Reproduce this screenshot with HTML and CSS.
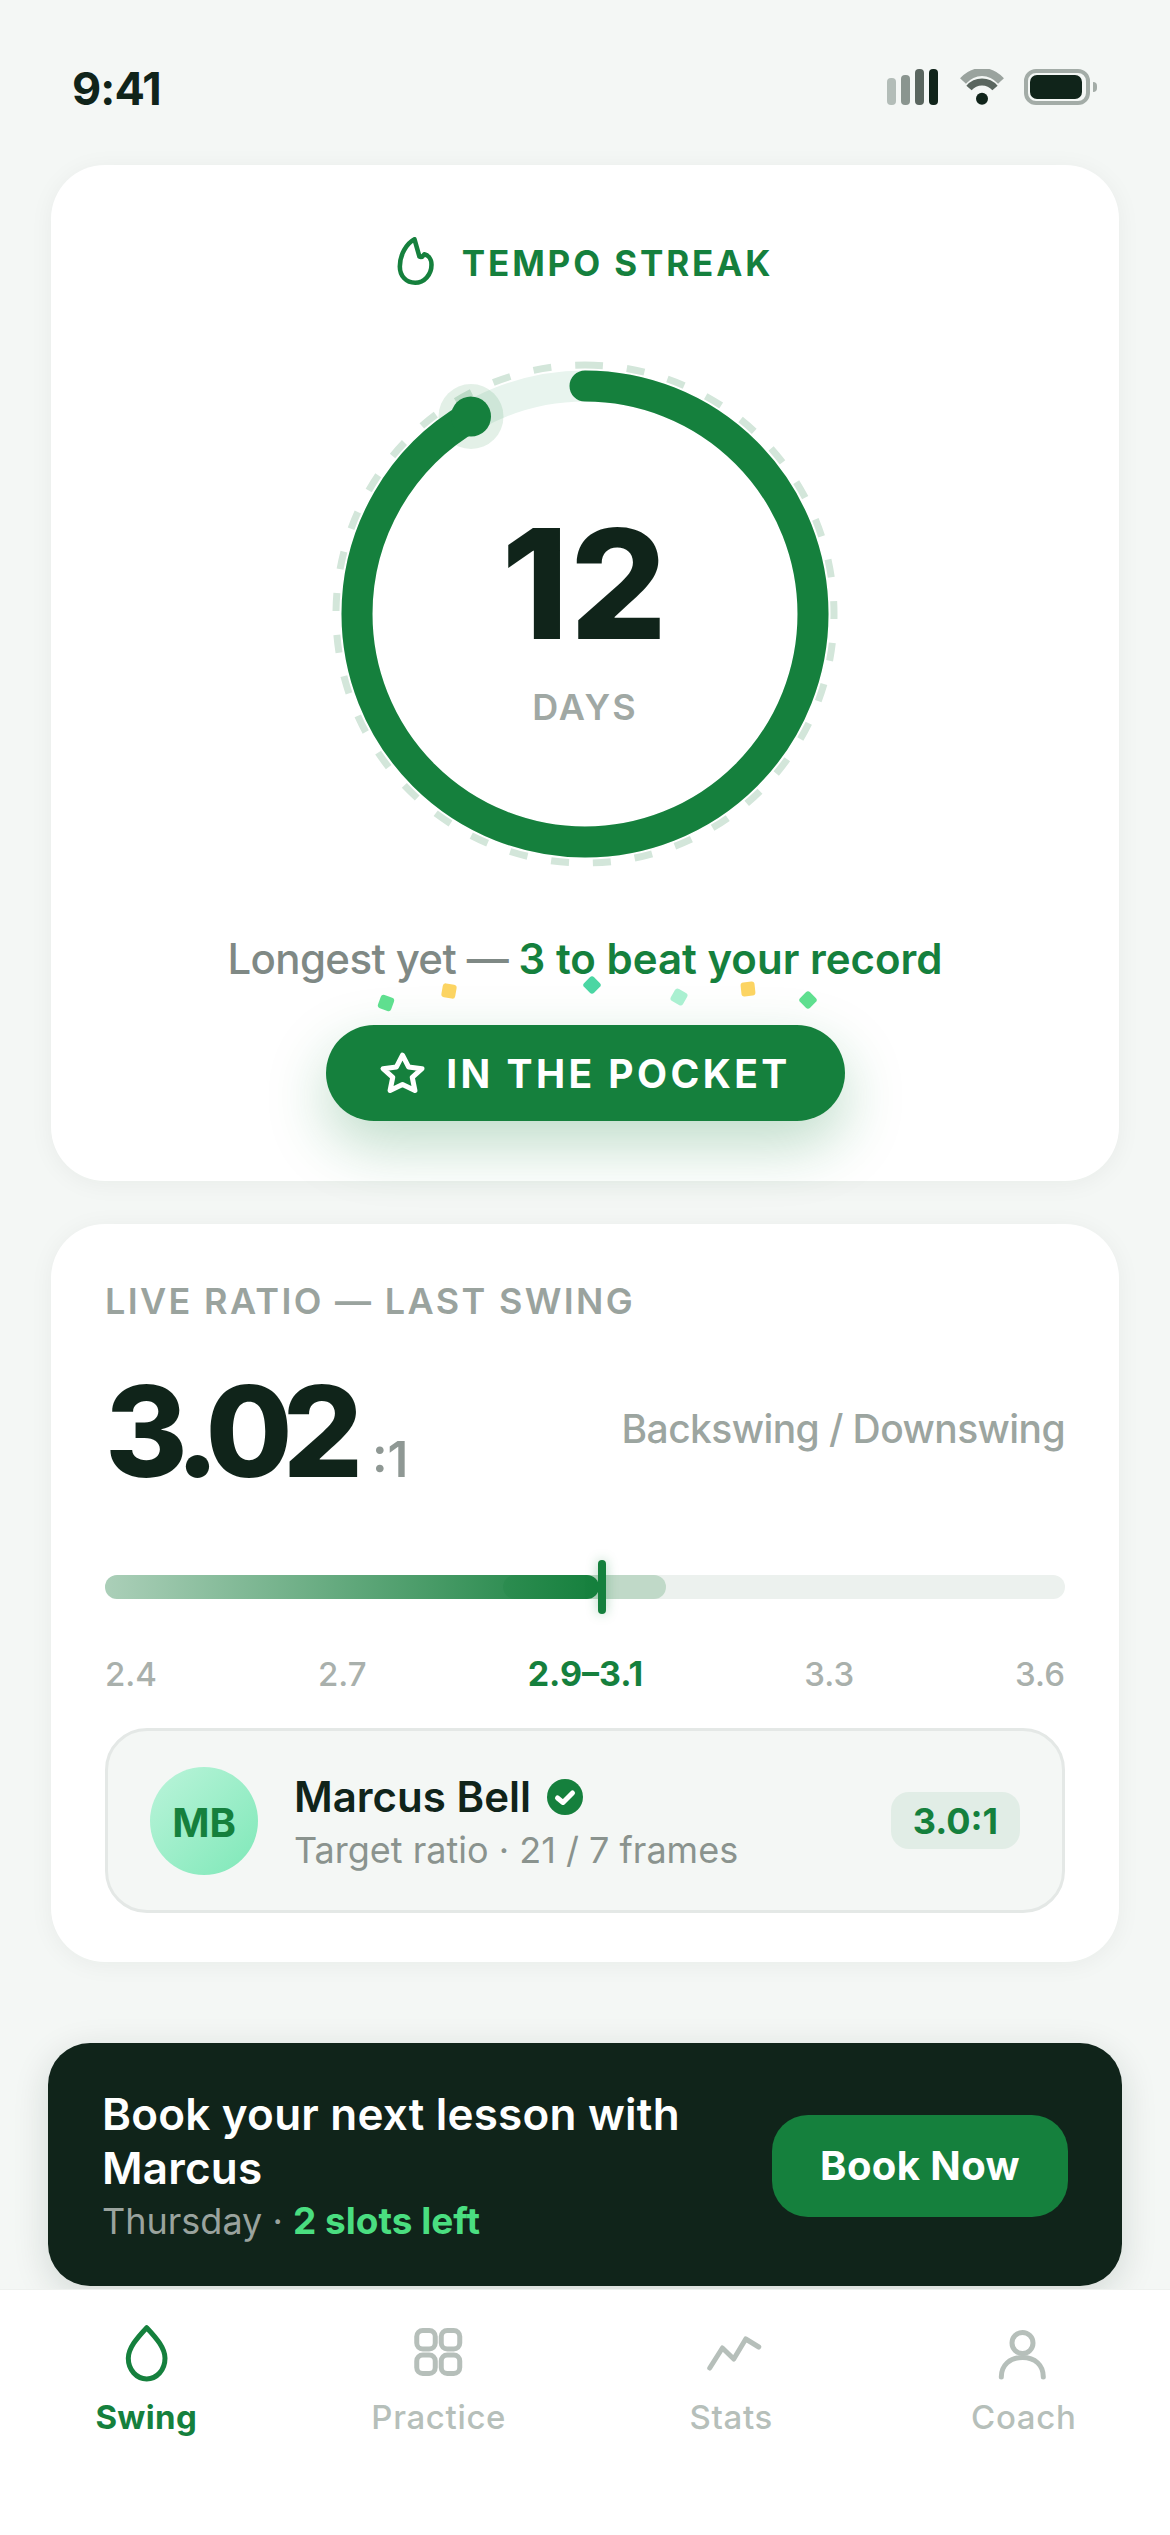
FILE: index.html
```html
<!DOCTYPE html>
<html lang="en">
<head>
    <meta charset="UTF-8">
    <meta name="viewport" content="width=device-width, initial-scale=1.0">
    <title>Tempo Streak</title>
    <link rel="stylesheet" href="styles.css">
</head>
<body>
    <div class="screen">
        <div class="status">
            <span class="time">9:41</span>
            <div class="status-icons">
                <div class="signal">
                    <span class="bar bar1"></span>
                    <span class="bar bar2"></span>
                    <span class="bar bar3"></span>
                    <span class="bar bar4"></span>
                </div>
                <svg class="wifi" viewBox="0 0 44 36" width="44" height="36">
                    <path d="M3 12 C14 0 30 0 41 12" fill="none" stroke="#9aa39e" stroke-width="8"/>
                    <path d="M9 19 C16 11 28 11 35 19" fill="none" stroke="#5a665f" stroke-width="7"/>
                    <circle cx="22" cy="29.7" r="6" fill="#10241a"/>
                </svg>
                <div class="battery"><span class="battery-level"></span></div>
                <span class="battery-cap"></span>
            </div>
        </div>

        <div class="card streak">
            <div class="streak-head">
                <svg viewBox="42 35 112 147" width="37" height="48">
                    <path d="M95 42 C70 55 50 90 50 125 C50 155 70 175 97 175 C125 175 147 150 147 120 C147 100 135 90 125 88 C120 95 115 98 110 95 Z" fill="none" stroke="#15803d" stroke-width="14" stroke-linejoin="round"/>
                </svg>
                <span class="streak-title">TEMPO STREAK</span>
            </div>

            <div class="ring">
                <svg viewBox="0 0 520 520" width="520" height="520">
                    <circle class="ring-dash" cx="260" cy="260" r="249"/>
                    <circle class="ring-track" cx="260" cy="260" r="228"/>
                    <circle class="ring-halo" cx="146" cy="62.5" r="32.5"/>
                    <circle class="ring-value" cx="260" cy="260" r="228"/>
                    <circle class="ring-dot" cx="146" cy="62.5" r="20"/>
                </svg>
                <div class="ring-center">
                    <div class="days-num">12</div>
                    <div class="days-label">DAYS</div>
                </div>
            </div>

            <p class="streak-note">Longest yet — <b>3 to beat your record</b></p>

            <span class="bit bit1"></span>
            <span class="bit bit2"></span>
            <span class="bit bit3"></span>
            <span class="bit bit4"></span>
            <span class="bit bit5"></span>
            <span class="bit bit6"></span>

            <button class="pocket">
                <svg viewBox="25 33 140 130" width="47" height="44">
                    <path d="M95 45 L113 80 L153 85 L124 111 L132 150 L95 132 L58 150 L66 111 L37 85 L77 80 Z" fill="none" stroke="#fff" stroke-width="15" stroke-linejoin="round"/>
                </svg>
                IN THE POCKET
            </button>
        </div>

        <div class="card ratio">
            <div class="ratio-title">LIVE RATIO — LAST SWING</div>
            <div class="ratio-row">
                <div class="ratio-value">3.02<span>:1</span></div>
                <div class="ratio-note">Backswing / Downswing</div>
            </div>

            <div class="track">
                <span class="zone"></span>
                <span class="fill"></span>
                <span class="marker"></span>
            </div>
            <div class="scale">
                <span>2.4</span>
                <span>2.7</span>
                <span class="scale-on">2.9–3.1</span>
                <span>3.3</span>
                <span>3.6</span>
            </div>

            <div class="coach">
                <div class="avatar">MB</div>
                <div class="coach-info">
                    <div class="coach-name">Marcus Bell
                        <svg viewBox="0 0 36 36" width="36" height="36">
                            <circle cx="18" cy="18" r="18" fill="#15803d"/>
                            <path d="M10.500 19 L16 23.500 L25.500 14" fill="none" stroke="#fff" stroke-width="5" stroke-linecap="round" stroke-linejoin="round"/>
                        </svg>
                    </div>
                    <div class="coach-sub">Target ratio · 21 / 7 frames</div>
                </div>
                <div class="coach-badge">3.0:1</div>
            </div>
        </div>

        <div class="banner">
            <div class="banner-text">
                <div class="banner-title">Book your next lesson with Marcus</div>
                <div class="banner-sub">Thursday · <b>2 slots left</b></div>
            </div>
            <button class="book">Book Now</button>
        </div>

        <div class="tabs">
            <div class="tab tab-on">
                <svg viewBox="0 0 72 72" width="72" height="72">
                    <path d="M36.700 10.700 C46.700 21.300 55 31.300 55 41.300 C55 53 46.700 62 36.700 62 C26.700 62 18.300 53 18.300 41.300 C18.300 31.300 26.700 21.300 36.700 10.700 Z"/>
                </svg>
                <span>Swing</span>
            </div>
            <div class="tab">
                <svg viewBox="0 0 72 72" width="72" height="72">
                    <rect x="13.750" y="13.500" width="18.500" height="18.500" rx="6"/>
                    <rect x="38.250" y="13.500" width="18.500" height="18.500" rx="6"/>
                    <rect x="13.750" y="38" width="18.500" height="18.500" rx="6"/>
                    <rect x="38.250" y="38" width="18.500" height="18.500" rx="6"/>
                </svg>
                <span>Practice</span>
            </div>
            <div class="tab">
                <svg viewBox="0 0 72 72" width="72" height="72">
                    <polyline points="14.750,51 27.400,31 38.750,42 50.750,22 63.750,30"/>
                </svg>
                <span>Stats</span>
            </div>
            <div class="tab">
                <svg viewBox="0 0 72 72" width="72" height="72">
                    <circle cx="34.500" cy="26" r="10.500"/>
                    <path d="M13.300 60 C13.300 48 22 40.500 34.500 40.500 C47 40.500 55.300 48 55.300 60"/>
                </svg>
                <span>Coach</span>
            </div>
        </div>
    </div>
</body>
</html>
```

FILE: styles.css
```css
*{
    margin: 0;
    padding: 0;
    box-sizing: border-box;
}
body{
    width: 1170px;
    height: 2535px;
    overflow: hidden;
    background: #f4f7f5;
    font-family: Inter, "Liberation Sans", sans-serif;
    color: #10241a;
}
.screen{
    display: flex;
    flex-direction: column;
    height: 2535px;
}

/* status bar */
.status{
    height: 165px;
    padding: 62px 73px 0 72px;
    display: flex;
    justify-content: space-between;
    align-items: flex-start;
}
.time{
    font-size: 45px;
    line-height: 54px;
    font-weight: 700;
    letter-spacing: -0.02em;
}
.status-icons{
    display: flex;
    align-items: center;
    padding-top: 7px;
    height: 43px;
}
.signal{
    display: flex;
    align-items: flex-end;
    gap: 5px;
    height: 36px;
    margin-right: 22px;
}
.bar{
    width: 9px;
    border-radius: 4px;
}
.bar1{ height: 27px; background: #b3bdb8; }
.bar2{ height: 30px; background: #8a958f; }
.bar3{ height: 36px; background: #5a665f; }
.bar4{ height: 36px; background: #10241a; }
.wifi{
    margin-right: 20px;
}
.battery{
    width: 66px;
    height: 36px;
    border: 4px solid #a3aca7;
    border-radius: 12px;
    padding: 2px;
}
.battery-level{
    display: block;
    width: 52px;
    height: 24px;
    background: #10241a;
    border-radius: 7px;
}
.battery-cap{
    width: 4px;
    height: 10px;
    margin-left: 3px;
    background: #a3aca7;
    border-radius: 0 5px 5px 0;
}

/* cards */
.card{
    position: relative;
    margin: 0 51px;
    background: #fff;
    border-radius: 54px;
    box-shadow: 0 3px 24px rgba(16, 36, 26, 0.05);
}
.streak{
    height: 1016px;
    padding-top: 72px;
    display: flex;
    flex-direction: column;
    align-items: center;
}
.streak-head{
    display: flex;
    align-items: center;
    gap: 28px;
    height: 48px;
}
.streak-title{
    padding-top: 3px;
    font-size: 35px;
    font-weight: 700;
    letter-spacing: 0.082em;
    color: #15803d;
}
.ring{
    position: relative;
    width: 520px;
    height: 520px;
    margin-top: 69px;
}
.ring svg{
    display: block;
}
.ring-dash{
    fill: none;
    stroke: #d3e6da;
    stroke-width: 7;
    stroke-dasharray: 18 24;
    transform: rotate(-90deg);
    transform-origin: 260px 260px;
}
.ring-track{
    fill: none;
    stroke: #e8f4ee;
    stroke-width: 31;
}
.ring-halo{
    fill: #15803d;
    opacity: 0.12;
}
.ring-value{
    fill: none;
    stroke: #15803d;
    stroke-width: 31;
    stroke-linecap: round;
    stroke-dasharray: 1313.200 1432.600;
    transform: rotate(-90deg);
    transform-origin: 260px 260px;
}
.ring-dot{
    fill: #15803d;
}
.ring-center{
    position: absolute;
    inset: 0;
    padding-top: 8px;
    display: flex;
    flex-direction: column;
    align-items: center;
    justify-content: center;
}
.days-num{
    font-size: 152px;
    line-height: 152px;
    font-weight: 800;
    letter-spacing: 0.01em;
}
.days-label{
    margin-top: 25px;
    font-size: 36px;
    line-height: 44px;
    font-weight: 600;
    letter-spacing: 0.06em;
    color: #a0a8a4;
}
.streak-note{
    margin-top: 58px;
    font-size: 42px;
    line-height: 54px;
    font-weight: 500;
    letter-spacing: -0.015em;
    color: #7f8985;
}
.streak-note b{
    font-weight: 600;
    letter-spacing: 0;
    color: #15803d;
}
.bit{
    position: absolute;
    width: 14px;
    height: 14px;
    border-radius: 3px;
}
.bit1{ left: 328px; top: 831px; background: #5fdf8f; transform: rotate(20deg); }
.bit2{ left: 391px; top: 819px; background: #fcd462; transform: rotate(10deg); }
.bit3{ left: 534px; top: 813px; background: #4bd6a3; transform: rotate(45deg); }
.bit4{ left: 621px; top: 825px; background: #aaf0d1; transform: rotate(30deg); }
.bit5{ left: 690px; top: 817px; background: #fcd462; transform: rotate(-6deg); }
.bit6{ left: 750px; top: 828px; background: #5fdf8f; transform: rotate(45deg); }
.pocket{
    margin-top: 39px;
    width: 519px;
    height: 96px;
    border: none;
    border-radius: 48px;
    background: #15803d;
    color: #fff;
    font-family: inherit;
    font-size: 39px;
    font-weight: 700;
    letter-spacing: 0.088em;
    display: flex;
    align-items: center;
    justify-content: center;
    gap: 20px;
    box-shadow: 0 24px 60px rgba(21, 128, 61, 0.28);
}

/* live ratio */
.ratio{
    margin-top: 43px;
    height: 738px;
    padding: 55px 54px 0;
}
.ratio-title{
    font-size: 36px;
    line-height: 44px;
    font-weight: 600;
    letter-spacing: 0.065em;
    color: #9aa39e;
}
.ratio-row{
    margin-top: 45px;
    display: flex;
    justify-content: space-between;
    align-items: center;
}
.ratio-value{
    font-size: 126px;
    line-height: 126px;
    font-weight: 800;
    letter-spacing: -0.08em;
}
.ratio-value span{
    margin-left: 19px;
    font-size: 49px;
    line-height: 0;
    font-weight: 600;
    letter-spacing: 0;
    color: #8f9894;
}
.ratio-note{
    padding-bottom: 6px;
    font-size: 39px;
    font-weight: 500;
    letter-spacing: -0.015em;
    color: #9ca5a0;
}
.track{
    position: relative;
    margin-top: 81px;
    height: 24px;
    border-radius: 12px;
    background: #ecf1ee;
}
.zone{
    position: absolute;
    left: 398px;
    width: 163px;
    height: 24px;
    border-radius: 12px;
    background: #c0d9c8;
}
.fill{
    position: absolute;
    left: 0;
    width: 494px;
    height: 24px;
    border-radius: 12px;
    background: linear-gradient(to right, rgba(21, 128, 61, 0.3), #15803d);
}
.marker{
    position: absolute;
    left: 493px;
    top: -15px;
    width: 8px;
    height: 54px;
    border-radius: 4px;
    background: #15803d;
    box-shadow: 0 0 12px rgba(21, 128, 61, 0.35);
}
.scale{
    margin-top: 55px;
    display: flex;
    justify-content: space-between;
    font-size: 33px;
    line-height: 40px;
    font-weight: 500;
    color: #a9b0ac;
}
.scale-on{
    font-size: 34px;
    font-weight: 700;
    color: #15803d;
}

/* coach row */
.coach{
    margin-top: 34px;
    height: 185px;
    padding: 0 42px;
    display: flex;
    align-items: center;
    background: #f4f7f5;
    border: 3px solid #e4e8e6;
    border-radius: 42px;
}
.avatar{
    width: 108px;
    height: 108px;
    padding-top: 4px;
    border-radius: 50%;
    background: linear-gradient(135deg, #bbf4da, #7ee8b8);
    color: #15803d;
    font-size: 40px;
    font-weight: 700;
    display: flex;
    align-items: center;
    justify-content: center;
}
.coach-info{
    flex: 1;
    margin-left: 36px;
    padding-top: 4px;
}
.coach-name{
    display: flex;
    align-items: center;
    gap: 16px;
    font-size: 42px;
    line-height: 50px;
    font-weight: 600;
}
.coach-sub{
    margin-top: 5px;
    font-size: 36px;
    line-height: 46px;
    color: #8a938e;
}
.coach-badge{
    padding: 0 22px;
    height: 57px;
    line-height: 59px;
    border-radius: 18px;
    background: #e1ede6;
    color: #15803d;
    font-size: 36px;
    font-weight: 700;
}

/* booking banner */
.banner{
    margin: 81px 48px 0;
    padding: 44px 54px 42px;
    display: flex;
    align-items: center;
    gap: 40px;
    background: #10241a;
    border-radius: 42px;
    box-shadow: 0 9px 36px rgba(16, 36, 26, 0.14);
}
.banner-text{
    flex: 1;
}
.banner-title{
    font-size: 44px;
    line-height: 54px;
    font-weight: 600;
    letter-spacing: 0.005em;
    color: #fff;
}
.banner-sub{
    margin-top: 3px;
    font-size: 36px;
    line-height: 46px;
    color: #9aa39e;
}
.banner-sub b{
    font-size: 37px;
    font-weight: 700;
    color: #4ade80;
}
.book{
    flex: none;
    width: 296px;
    height: 102px;
    border: none;
    border-radius: 36px;
    background: #15803d;
    color: #fff;
    font-family: inherit;
    font-size: 40px;
    font-weight: 700;
    letter-spacing: 0.01em;
}

/* tab bar */
.tabs{
    position: relative;
    flex: 1;
    margin-top: 3px;
    padding-top: 27px;
    display: grid;
    grid-template-columns: repeat(4, 1fr);
    background: #fff;
    border-top: 1px solid #eef1ef;
}
.tab{
    display: flex;
    flex-direction: column;
    align-items: center;
    gap: 8px;
    font-size: 33px;
    line-height: 40px;
    font-weight: 500;
    letter-spacing: 0.02em;
    color: #b6bfba;
}
.tab svg{
    fill: none;
    stroke: #b6bfba;
    stroke-width: 5;
    stroke-linecap: round;
    stroke-linejoin: round;
}
.tab-on{
    font-weight: 700;
    letter-spacing: 0.01em;
    color: #15803d;
}
.tab-on svg{
    stroke: #15803d;
}
```
